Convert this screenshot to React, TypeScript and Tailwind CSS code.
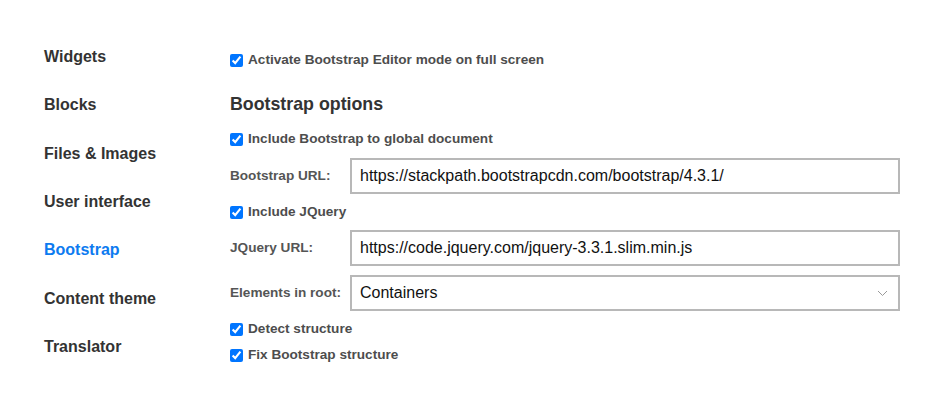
import React from "react";

const navItems = [
  "Widgets",
  "Blocks",
  "Files & Images",
  "User interface",
  "Bootstrap",
  "Content theme",
  "Translator",
];

const Check = ({ label, className = "" }: { label: string; className?: string }) => (
  <label className={`flex items-center h-5 gap-[5px] text-[13.6px] font-bold text-[#4d4d4d] ${className}`}>
    <input type="checkbox" defaultChecked className="m-0 w-[13px] h-[13px] accent-[#0075ff]" />
    <span>{label}</span>
  </label>
);

const Field = ({ label, children, className = "" }: { label: string; children: React.ReactNode; className?: string }) => (
  <div className={`flex items-center h-9 ${className}`}>
    <span className="w-[120px] shrink-0 text-[13.6px] font-bold text-[#555]">{label}</span>
    {children}
  </div>
);

export default function App() {
  return (
    <div
      className="w-[950px] h-[414px] bg-white flex"
      style={{ fontFamily: '"Liberation Sans", Arial, sans-serif' }}
    >
      <nav className="w-[230px] shrink-0 pt-[33px] pl-[44px] flex flex-col">
        {navItems.map((item) => (
          <div
            key={item}
            className={`h-[48.33px] flex items-center text-[16px] font-bold ${
              item === "Bootstrap" ? "text-[#0d7bf0]" : "text-[#333]"
            }`}
          >
            {item}
          </div>
        ))}
      </nav>

      <main className="flex-1 pt-[50px] pr-[50px] flex flex-col">
        <Check label="Activate Bootstrap Editor mode on full screen" />
        <h2 className="mt-[22px] h-6 flex items-center text-[17.8px] font-bold text-[#333]">
          Bootstrap options
        </h2>
        <Check label="Include Bootstrap to global document" className="mt-[13px]" />
        <Field label="Bootstrap URL:" className="mt-[9px]">
          <input
            defaultValue="https://stackpath.bootstrapcdn.com/bootstrap/4.3.1/"
            className="flex-1 h-9 border-2 border-[#b8b8b8] pl-2 text-[16px] text-[#111] outline-none"
          />
        </Field>
        <Check label="Include JQuery" className="mt-2" />
        <Field label="JQuery URL:" className="mt-2">
          <input
            defaultValue="https://code.jquery.com/jquery-3.3.1.slim.min.js"
            className="flex-1 h-9 border-2 border-[#b8b8b8] pl-2 text-[16px] text-[#111] outline-none"
          />
        </Field>
        <Field label="Elements in root:" className="mt-[9px]">
          <div className="relative flex-1 h-9">
            <select
              defaultValue="Containers"
              className="w-full h-9 appearance-none border-2 border-[#b8b8b8] bg-white pl-2 text-[16px] text-[#111] outline-none"
            >
              <option>Containers</option>
              <option>Rows</option>
              <option>Columns</option>
            </select>
            <svg
              className="absolute right-[12px] top-[15px] pointer-events-none"
              width="11"
              height="7"
              viewBox="0 0 11 7"
              fill="none"
            >
              <path d="M1 1l4.5 4.5L10 1" stroke="#9a9a9a" strokeWidth="1" />
            </svg>
          </div>
        </Field>
        <Check label="Detect structure" className="mt-2" />
        <Check label="Fix Bootstrap structure" className="mt-[6px]" />
      </main>
    </div>
  );
}
